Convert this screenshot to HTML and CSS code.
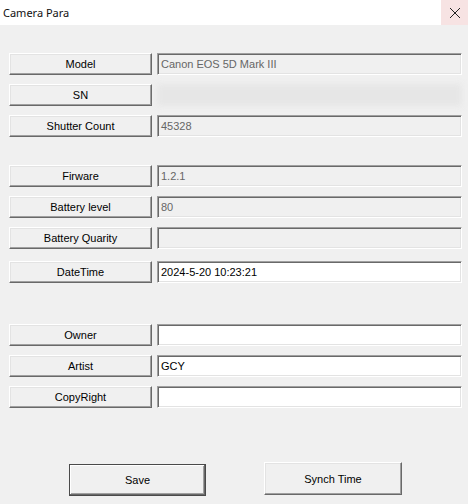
FILE: index.html
```html
<!DOCTYPE html>
<html>
<head>
<meta charset="utf-8">
<link rel="stylesheet" href="styles.css">
</head>
<body>
<div class="window">
  <div class="titlebar">
    <span class="title">Camera Para</span>
    <div class="close">
      <svg width="12" height="12" viewBox="0 0 12 12"><path d="M1 1 L11 11 M11 1 L1 11" stroke="#222" stroke-width="1" fill="none"/></svg>
    </div>
  </div>
  <div class="body">
    <div class="form">
      <div class="group">
        <div class="row"><div class="btn label">Model</div><div class="field ro">Canon EOS 5D Mark III</div></div>
        <div class="row"><div class="btn label">SN</div><div class="field blur"></div></div>
        <div class="row"><div class="btn label">Shutter Count</div><div class="field ro">45328</div></div>
      </div>
      <div class="group g2">
        <div class="row"><div class="btn label">Firware</div><div class="field ro">1.2.1</div></div>
        <div class="row"><div class="btn label">Battery level</div><div class="field ro">80</div></div>
        <div class="row"><div class="btn label">Battery Quarity</div><div class="field ro"></div></div>
        <div class="row dt"><div class="btn label">DateTime</div><div class="field rw">2024-5-20 10:23:21</div></div>
      </div>
      <div class="group g3">
        <div class="row"><div class="btn label">Owner</div><div class="field rw"></div></div>
        <div class="row"><div class="btn label">Artist</div><div class="field rw">GCY</div></div>
        <div class="row"><div class="btn label">CopyRight</div><div class="field rw"></div></div>
      </div>
    </div>
    <div class="actions">
      <div class="btn action default">Save</div>
      <div class="btn action sync">Synch Time</div>
    </div>
  </div>
</div>
</body>
</html>
```
FILE: styles.css
```css
html, body {
  margin: 0;
  padding: 0;
}
body {
  width: 468px;
  height: 504px;
  overflow: hidden;
  font-family: "Liberation Sans", Arial, sans-serif;
  font-size: 11px;
  color: #000;
  background: #f0f0f0;
}
.window {
  width: 468px;
  height: 504px;
  display: flex;
  flex-direction: column;
}
.titlebar {
  height: 25px;
  background: #fff;
  display: flex;
  align-items: center;
  justify-content: space-between;
  flex: none;
}
.title {
  padding-left: 3px;
  font-family: "Noto Sans", "Liberation Sans", sans-serif;
  font-size: 11px;
  color: #111;
  margin-top: -1px;
}
.close {
  width: 27px;
  height: 25px;
  background: #f7e3e3;
  display: flex;
  align-items: center;
  justify-content: center;
}
.body {
  flex: 1;
  background: #f0f0f0;
  padding-top: 28px;
}
.form {
  padding-left: 9px;
  display: flex;
  flex-direction: column;
}
.group {
  display: flex;
  flex-direction: column;
  gap: 9px;
}
.g2 {
  margin-top: 28px;
}
.dt {
  margin-top: 3px;
}
.g3 {
  margin-top: 41px;
}
.row {
  display: flex;
  gap: 5px;
  height: 22px;
}
.btn {
  box-sizing: border-box;
  display: flex;
  align-items: center;
  justify-content: center;
  background: #f0f0f0;
  border: 1px solid;
  border-color: #fff #696969 #696969 #fff;
  box-shadow: inset -1px -1px #a0a0a0, inset 1px 1px #e3e3e3;
  color: #000;
}
.label {
  width: 143px;
  height: 22px;
}
.field {
  box-sizing: border-box;
  width: 305px;
  height: 22px;
  display: flex;
  align-items: center;
  padding-left: 3px;
  border: 1px solid;
  border-color: #a0a0a0 #fff #fff #a0a0a0;
  box-shadow: inset 1px 1px #696969, inset -1px -1px #e3e3e3;
  white-space: nowrap;
}
.ro {
  background: #f0f0f0;
  color: #666;
}
.rw {
  background: #fff;
  color: #000;
}
.blur {
  border: none;
  box-shadow: none;
  background: #e6e6e6;
  filter: blur(3px);
}
.actions {
  display: flex;
  align-items: flex-start;
  margin-top: 54px;
  padding-left: 69px;
  gap: 58px;
}
.action {
  width: 137px;
  height: 32px;
  margin-top: 2px;
}
.default {
  border: 1px solid #4a4a4a;
  box-shadow: inset -1px -1px #696969, inset 1px 1px #fff, inset -2px -2px #a0a0a0;
}
.sync {
  width: 138px;
  height: 33px;
  margin-top: 0;
}
```
